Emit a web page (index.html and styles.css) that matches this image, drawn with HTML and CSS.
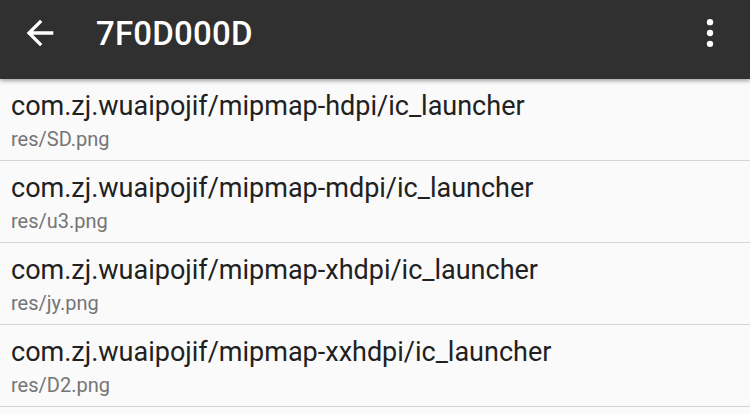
FILE: index.html
```html
<!DOCTYPE html>
<html lang="en">
<head>
<meta charset="UTF-8">
<meta name="viewport" content="width=device-width, initial-scale=1.0">
<title>7F0D000D</title>
<link rel="stylesheet" href="styles.css">
</head>
<body>
<div class="toolbar">
<button class="icon-btn back" aria-label="Back">
<svg width="40" height="40" viewBox="0 0 24 24"><path fill="#fff" d="M20 11H7.83l5.59-5.59L12 4l-8 8 8 8 1.41-1.41L7.83 13H20v-2z"/></svg>
</button>
<h1 class="title">7F0D000D</h1>
<button class="icon-btn more" aria-label="More">
<svg width="40" height="40" viewBox="0 0 24 24"><circle cx="12" cy="5.5" r="1.9" fill="#fff"/><circle cx="12" cy="12" r="1.9" fill="#fff"/><circle cx="12" cy="18.5" r="1.9" fill="#fff"/></svg>
</button>
</div>
<ul class="list">
<li class="item"><div class="primary">com.zj.wuaipojif/mipmap-hdpi/ic_launcher</div><div class="secondary">res/SD.png</div></li>
<li class="item"><div class="primary">com.zj.wuaipojif/mipmap-mdpi/ic_launcher</div><div class="secondary">res/u3.png</div></li>
<li class="item"><div class="primary">com.zj.wuaipojif/mipmap-xhdpi/ic_launcher</div><div class="secondary">res/jy.png</div></li>
<li class="item"><div class="primary">com.zj.wuaipojif/mipmap-xxhdpi/ic_launcher</div><div class="secondary">res/D2.png</div></li>
</ul>
</body>
</html>
```
FILE: styles.css
```css
html, body { margin: 0; padding: 0; }
body { font-family: Roboto, "Noto Sans", sans-serif; background: #fafafa; color: #212121; width: 750px; height: 414px; overflow: hidden; }
.toolbar { position: relative; z-index: 1; height: 79px; background: #303030; display: flex; align-items: flex-start; padding-top: 13px; box-sizing: border-box; box-shadow: 0 2px 4px rgba(0, 0, 0, 0.35); }
.icon-btn { background: none; border: none; padding: 0; width: 40px; height: 40px; display: flex; align-items: center; justify-content: center; }
.back { margin-left: 20px; }
.title { margin: 1px 0 0 36px; font-size: 33px; font-weight: 500; color: #fff; line-height: 40px; letter-spacing: 0.2px; flex: 1; }
.more { margin-right: 20px; }
.list { list-style: none; margin: 0; padding: 0; }
.item { height: 82px; border-bottom: 1px solid #d6d6d6; padding: 11px 11px 0; box-sizing: border-box; }
.primary { font-size: 27px; line-height: 33px; color: #212121; }
.secondary { font-size: 20px; line-height: 24px; margin-top: 4px; color: #757575; }
```
